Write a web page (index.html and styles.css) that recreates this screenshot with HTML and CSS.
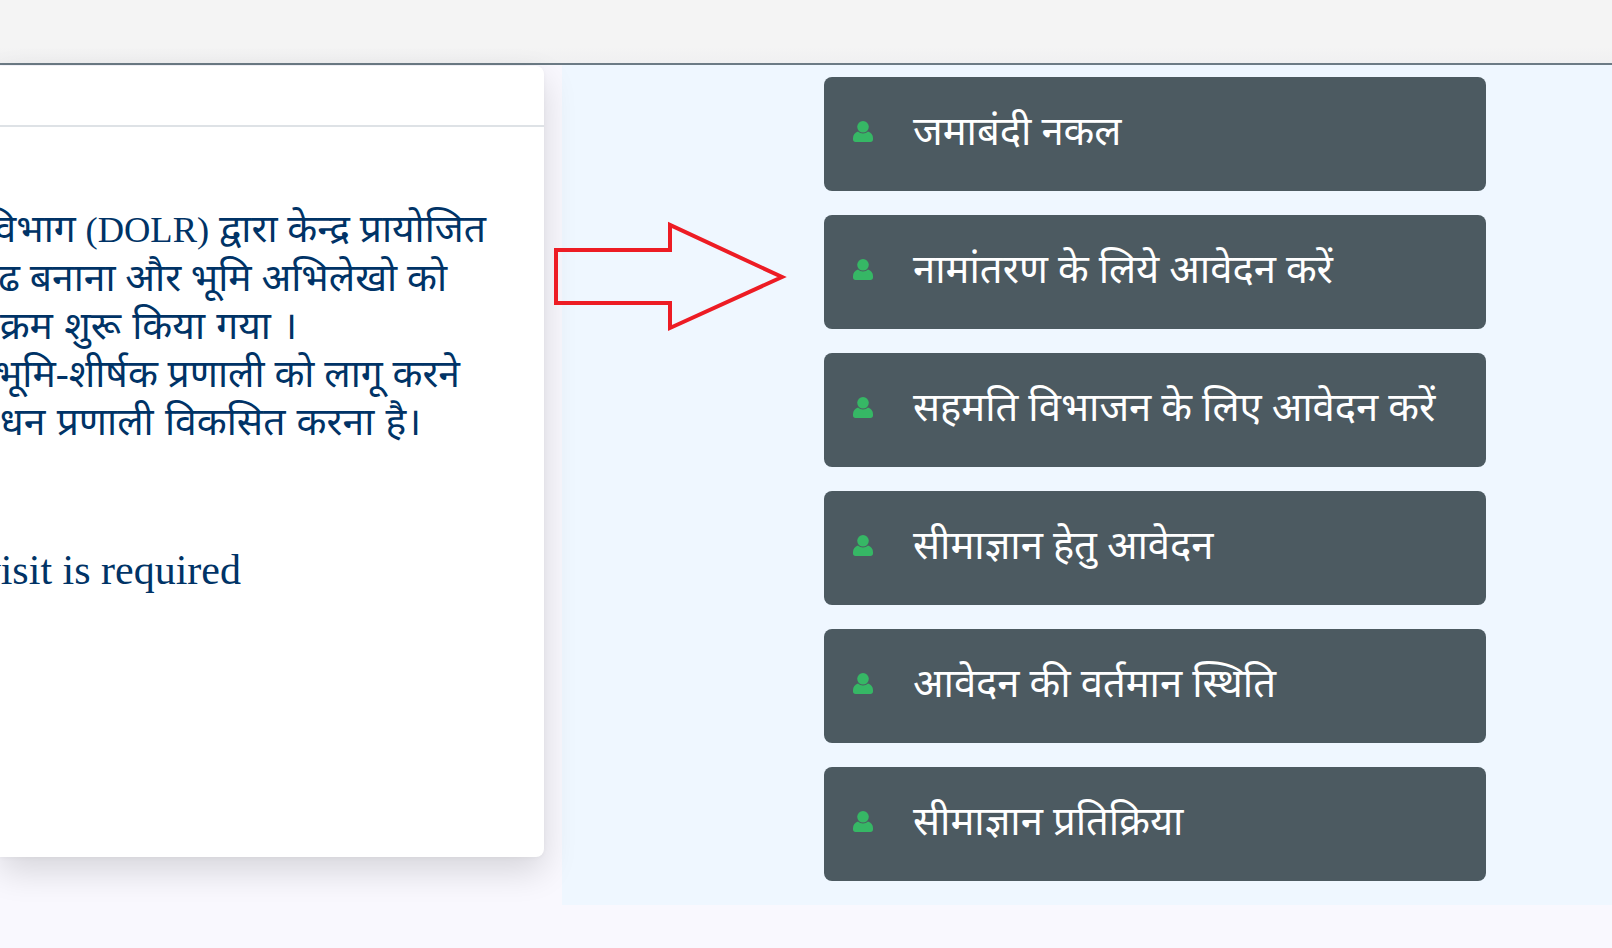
FILE: index.html
```html
<!DOCTYPE html>
<html lang="hi">
<head>
<meta charset="utf-8">
<title>Bhulekh</title>
<link rel="stylesheet" href="styles.css">
</head>
<body>
<header class="topbar"></header>
<main class="layout">
  <section class="card">
    <div class="card-head"></div>
    <div class="card-body">
      <p class="hindi">
        <span class="ln l1">विभाग <span class="lat">(DOLR)</span> द्वारा केन्द्र प्रायोजित</span>
        <span class="ln l2">ढ बनाना और भूमि अभिलेखो को</span>
        <span class="ln l3">क्रम शुरू किया गया ।</span>
        <span class="ln l4">भूमि-शीर्षक प्रणाली को लागू करने</span>
        <span class="ln l5">धन प्रणाली विकसित करना है।</span>
      </p>
      <p class="note"><span class="ln l6">visit is required</span></p>
    </div>
  </section>
  <nav class="actions">
    <a class="action"><svg class="user" viewBox="0 0 20 21"><circle cx="10" cy="5.800" r="5.800"/><path d="M5 10.500C2 11.500 0 14 0 17v1.500C0 20 1 21 2.500 21h15c1.500 0 2.500-1 2.500-2.500V17c0-3-2-5.500-5-6.500-2.500 2.500-7.500 2.500-10 0z"/></svg><span>जमाबंदी नकल</span></a>
    <a class="action"><svg class="user" viewBox="0 0 20 21"><circle cx="10" cy="5.800" r="5.800"/><path d="M5 10.500C2 11.500 0 14 0 17v1.500C0 20 1 21 2.500 21h15c1.500 0 2.500-1 2.500-2.500V17c0-3-2-5.500-5-6.500-2.500 2.500-7.500 2.500-10 0z"/></svg><span>नामांतरण के लिये आवेदन करें</span></a>
    <a class="action"><svg class="user" viewBox="0 0 20 21"><circle cx="10" cy="5.800" r="5.800"/><path d="M5 10.500C2 11.500 0 14 0 17v1.500C0 20 1 21 2.500 21h15c1.500 0 2.500-1 2.500-2.500V17c0-3-2-5.500-5-6.500-2.500 2.500-7.500 2.500-10 0z"/></svg><span>सहमति विभाजन के लिए आवेदन करें</span></a>
    <a class="action"><svg class="user" viewBox="0 0 20 21"><circle cx="10" cy="5.800" r="5.800"/><path d="M5 10.500C2 11.500 0 14 0 17v1.500C0 20 1 21 2.500 21h15c1.500 0 2.500-1 2.500-2.500V17c0-3-2-5.500-5-6.500-2.500 2.500-7.500 2.500-10 0z"/></svg><span>सीमाज्ञान हेतु आवेदन</span></a>
    <a class="action"><svg class="user" viewBox="0 0 20 21"><circle cx="10" cy="5.800" r="5.800"/><path d="M5 10.500C2 11.500 0 14 0 17v1.500C0 20 1 21 2.500 21h15c1.500 0 2.500-1 2.500-2.500V17c0-3-2-5.500-5-6.500-2.500 2.500-7.500 2.500-10 0z"/></svg><span>आवेदन की वर्तमान स्थिति</span></a>
    <a class="action"><svg class="user" viewBox="0 0 20 21"><circle cx="10" cy="5.800" r="5.800"/><path d="M5 10.500C2 11.500 0 14 0 17v1.500C0 20 1 21 2.500 21h15c1.500 0 2.500-1 2.500-2.500V17c0-3-2-5.500-5-6.500-2.500 2.500-7.500 2.500-10 0z"/></svg><span>सीमाज्ञान प्रतिक्रिया</span></a>
  </nav>
  <svg class="arrow" viewBox="0 0 240 116"><polygon points="4,30 118,30 118,5 230,57 118,108 118,83 4,83"/></svg>
</main>
</body>
</html>
```
FILE: styles.css
```css
* { box-sizing: border-box; }
html, body { margin: 0; height: 100%; }
body {
  background: #f9f8fe;
  overflow: hidden;
  font-family: "Liberation Serif", "Noto Sans", serif;
}
.topbar {
  height: 65px;
  background: linear-gradient(#f4f4f4 75%, #f0f0f1);
  border-bottom: 2px solid #6c7b85;
}
.layout {
  position: relative;
  display: flex;
  align-items: flex-start;
}
.card {
  position: relative;
  z-index: 1;
  flex: none;
  width: 544px;
  height: 791px;
  margin: 1px 18px 0 0;
  background: #fff;
  border-radius: 0 8px 8px 0;
  box-shadow: 0 14px 34px rgba(0, 0, 0, .14), 0 1px 4px rgba(0, 0, 0, .04);
  overflow: hidden;
}
.card-head {
  height: 61px;
  border-bottom: 2px solid #dee2e6;
}
.card-body { margin-left: -300px; padding-top: 78px; }
.hindi, .note {
  margin: 0;
  color: #003366;
  font-size: 39px;
  line-height: 48px;
  text-align: right;
}
.lat { font-size: 36.500px; }
.note { margin-top: 100px; font-size: 42px; }
.ln { display: block; white-space: nowrap; }
.l1 { padding-right: 58px; }
.l2 { padding-right: 97px; }
.l3 { padding-right: 247px; word-spacing: 1.500px; }
.l4 { padding-right: 84px; }
.l5 { padding-right: 123px; word-spacing: 1.500px; }
.l6 { padding-right: 303px; }
.actions {
  flex: 1;
  display: flex;
  flex-direction: column;
  gap: 24px;
  height: 840px;
  padding: 12px 126px 0 262px;
  background: #eff7ff;
}
.action {
  display: flex;
  align-items: center;
  gap: 40px;
  height: 114px;
  padding: 0 0 9px 29px;
  background: #4c5a61;
  border-radius: 8px;
  color: #fff;
  font-size: 40px;
}
.user { width: 20px; height: 21px; margin-top: 4px; fill: #36b765; flex: none; }
.arrow {
  position: absolute;
  z-index: 2;
  left: 552px;
  top: 155px;
  width: 240px;
  height: 116px;
  fill: none;
  stroke: #ed1c24;
  stroke-width: 4;
}
```
